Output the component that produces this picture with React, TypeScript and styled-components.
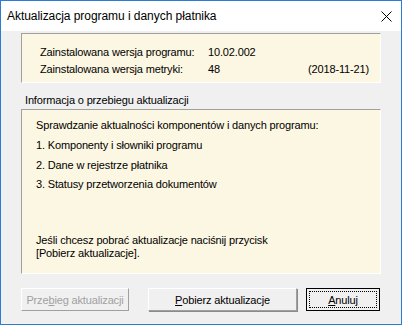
import React from 'react'
import styled, { createGlobalStyle } from 'styled-components'

const GlobalStyle = createGlobalStyle`
  html, body {
    margin: 0;
    padding: 0;
    background: #ffffff;
  }
`

const Window = styled('div')`
  width: 402px;
  height: 325px;
  box-sizing: border-box;
  border: 1px solid #2b7cd3;
  display: flex;
  flex-direction: column;
  font-family: 'Liberation Sans', Arial, sans-serif;
  font-size: 11px;
  letter-spacing: -0.15px;
  color: #000;
`

const TitleBar = styled('div')`
  height: 30px;
  background: #ffffff;
  display: flex;
  align-items: center;
  justify-content: space-between;
  padding: 0 9px 0 6px;
  font-size: 12px;
  letter-spacing: -0.05px;
`

const Body = styled('div')`
  flex: 1;
  background: #f0f0f0;
  padding: 2px 20px 0 20px;
  display: flex;
  flex-direction: column;
`

const Panel = styled('div')<{ $h: number }>`
  background: #fcf7e2;
  border-top: 1px solid #a0a0a0;
  border-left: 1px solid #a0a0a0;
  border-right: 1px solid #ffffff;
  border-bottom: 1px solid #ffffff;
  height: ${(p) => p.$h}px;
  box-sizing: border-box;
`

const VersionGrid = styled('div')`
  display: grid;
  grid-template-columns: 168px 1fr auto;
  grid-auto-rows: 17px;
  align-items: center;
  padding: 9px 11px 0 18px;
`

const GroupLabel = styled('div')`
  height: 13px;
  line-height: 13px;
  margin: 11px 0 2px 4px;
`

const InfoBody = styled('div')`
  padding: 9px 0 0 14px;
  display: flex;
  flex-direction: column;
`

const InfoLine = styled('div')<{ $gap?: number }>`
  line-height: 13px;
  margin-top: ${(p) => p.$gap ?? 0}px;
`

const ButtonRow = styled('div')`
  display: flex;
  margin-top: 14px;
`

const Btn = styled('div')<{ $w: number; $ml: number; $disabled?: boolean }>`
  width: ${(p) => p.$w}px;
  height: 23px;
  margin-left: ${(p) => p.$ml}px;
  box-sizing: border-box;
  display: flex;
  align-items: center;
  justify-content: center;
  background: #f0f0f0;
  border-top: 1px solid #ffffff;
  border-left: 1px solid #ffffff;
  border-right: 1px solid #a0a0a0;
  border-bottom: 1px solid #a0a0a0;
  box-shadow: ${(p) => (p.$disabled ? 'none' : '1px 1px 0 #8a8a8a')};
  color: ${(p) => (p.$disabled ? '#a0a0a0' : '#000')};
  u {
    text-decoration: underline;
  }
`

const DefaultBtn = styled('div')`
  width: 74px;
  height: 23px;
  margin-left: 9px;
  box-sizing: border-box;
  border: 1px solid #000;
  padding: 2px;
  background: #f0f0f0;
  display: flex;
`

const FocusRect = styled('div')`
  flex: 1;
  border: 1px dotted #000;
  display: flex;
  align-items: center;
  justify-content: center;
`

const CloseIcon = () => (
  <svg width="11" height="11" viewBox="0 0 11 11">
    <path d="M0.5 0.5 L10.5 10.5 M10.5 0.5 L0.5 10.5" stroke="#000" strokeWidth="1" fill="none" />
  </svg>
)

export default function App() {
  return (
    <>
      <GlobalStyle />
      <Window>
        <TitleBar>
          <span>Aktualizacja programu i danych płatnika</span>
          <CloseIcon />
        </TitleBar>
        <Body>
          <Panel $h={50}>
            <VersionGrid>
              <span>Zainstalowana wersja programu:</span>
              <span>10.02.002</span>
              <span />
              <span>Zainstalowana wersja metryki:</span>
              <span>48</span>
              <span>(2018-11-21)</span>
            </VersionGrid>
          </Panel>
          <GroupLabel>Informacja o przebiegu aktualizacji</GroupLabel>
          <Panel $h={165}>
            <InfoBody>
              <InfoLine>Sprawdzanie aktualności komponentów i danych programu:</InfoLine>
              <InfoLine $gap={7}>1. Komponenty i słowniki programu</InfoLine>
              <InfoLine $gap={7}>2. Dane w rejestrze płatnika</InfoLine>
              <InfoLine $gap={6}>3. Statusy przetworzenia dokumentów</InfoLine>
              <InfoLine $gap={43}>Jeśli chcesz pobrać aktualizacje naciśnij przycisk</InfoLine>
              <InfoLine>[Pobierz aktualizacje].</InfoLine>
            </InfoBody>
          </Panel>
          <ButtonRow>
            <Btn $w={108} $ml={0} $disabled>
              <span>Prze<u>b</u>ieg aktualizacji</span>
            </Btn>
            <Btn $w={149} $ml={19}>
              <span><u>P</u>obierz aktualizacje</span>
            </Btn>
            <DefaultBtn>
              <FocusRect>
                <span><u>A</u>nuluj</span>
              </FocusRect>
            </DefaultBtn>
          </ButtonRow>
        </Body>
      </Window>
    </>
  )
}
